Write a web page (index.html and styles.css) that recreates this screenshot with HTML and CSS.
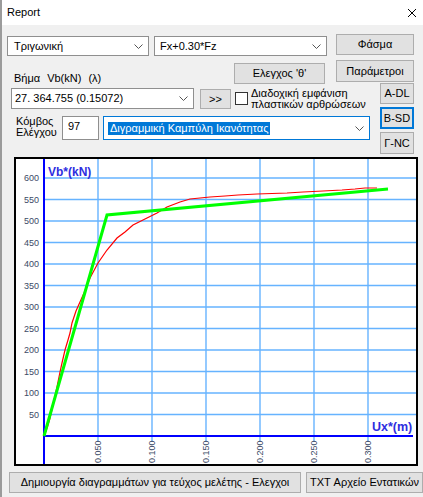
FILE: index.html
```html
<!DOCTYPE html>
<html lang="el">
<head>
<meta charset="utf-8">
<title>Report</title>
<link rel="stylesheet" href="styles.css">
</head>
<body>
<div class="window">
  <div class="titlebar">
    <span class="title">Report</span>
    <svg class="close" width="10" height="10" viewBox="0 0 10 10"><path d="M1 1 L9 9 M9 1 L1 9" stroke="#000" stroke-width="1" fill="none"/></svg>
  </div>
  <div class="content">
    <div class="row1">
      <div class="combo combo-type"><span>Τριγωνική</span><svg class="chev" width="9" height="5" viewBox="0 0 9 5"><path d="M0.5 0.5 L4.5 4.5 L8.5 0.5" fill="none" stroke="#555" stroke-width="1"/></svg></div>
      <div class="combo combo-load"><span>Fx+0.30*Fz</span><svg class="chev" width="9" height="5" viewBox="0 0 9 5"><path d="M0.5 0.5 L4.5 4.5 L8.5 0.5" fill="none" stroke="#555" stroke-width="1"/></svg></div>
      <button class="btn btn-spectrum">Φάσμα</button>
    </div>
    <div class="row2">
      <div class="leftblock">
        <div class="subA">
          <div class="step-label"><span>Βήμα</span><span class="lbl-gap">Vb(kN)</span><span class="lbl-gap">(λ)</span></div>
          <button class="btn btn-theta">Ελεγχος 'θ'</button>
        </div>
        <div class="subB">
          <div class="combo combo-step"><span>27. 364.755 (0.15072)</span><svg class="chev" width="9" height="5" viewBox="0 0 9 5"><path d="M0.5 0.5 L4.5 4.5 L8.5 0.5" fill="none" stroke="#555" stroke-width="1"/></svg></div>
          <button class="btn btn-next">&gt;&gt;</button>
          <span class="checkbox"></span>
          <div class="check-text">Διαδοχική εμφάνιση<br>πλαστικών αρθρώσεων</div>
        </div>
        <div class="subC">
          <div class="node-label">Κόμβος<br>Ελέγχου</div>
          <div class="input-node">97</div>
          <div class="combo combo-curve"><span class="selected">Διγραμμική Καμπύλη Ικανότητας</span><svg class="chev" width="9" height="5" viewBox="0 0 9 5"><path d="M0.5 0.5 L4.5 4.5 L8.5 0.5" fill="none" stroke="#555" stroke-width="1"/></svg></div>
        </div>
      </div>
      <div class="rightcol">
        <button class="btn btn-params">Παράμετροι</button>
        <button class="btn btn-level lvl-a">A-DL</button>
        <button class="btn btn-level lvl-b default">B-SD</button>
        <button class="btn btn-level lvl-c">Γ-NC</button>
      </div>
    </div>
    <div class="chart">
      <svg width="404" height="309" viewBox="14 157 404 309">
        <rect x="14" y="157" width="404" height="309" fill="#fff"/>
        <g class="grid">
          <line x1="98" y1="158" x2="98" y2="465"/>
          <line x1="152" y1="158" x2="152" y2="465"/>
          <line x1="206" y1="158" x2="206" y2="465"/>
          <line x1="260" y1="158" x2="260" y2="465"/>
          <line x1="314" y1="158" x2="314" y2="465"/>
          <line x1="368" y1="158" x2="368" y2="465"/>
          <line x1="44" y1="178" x2="416" y2="178"/>
          <line x1="44" y1="199.5" x2="416" y2="199.5"/>
          <line x1="44" y1="221" x2="416" y2="221"/>
          <line x1="44" y1="242.5" x2="416" y2="242.5"/>
          <line x1="44" y1="264" x2="416" y2="264"/>
          <line x1="44" y1="285.5" x2="416" y2="285.5"/>
          <line x1="44" y1="307" x2="416" y2="307"/>
          <line x1="44" y1="328.5" x2="416" y2="328.5"/>
          <line x1="44" y1="350" x2="416" y2="350"/>
          <line x1="44" y1="371.5" x2="416" y2="371.5"/>
          <line x1="44" y1="393" x2="416" y2="393"/>
          <line x1="44" y1="414.5" x2="416" y2="414.5"/>
        </g>
        <g class="axis">
          <line x1="44" y1="158" x2="44" y2="465"/>
          <line x1="44" y1="436" x2="413" y2="436"/>
        </g>
        <g class="ylabels">
          <text x="39" y="181">600</text>
          <text x="39" y="202.5">550</text>
          <text x="39" y="224">500</text>
          <text x="39" y="245.5">450</text>
          <text x="39" y="267">400</text>
          <text x="39" y="288.5">350</text>
          <text x="39" y="310">300</text>
          <text x="39" y="331.5">250</text>
          <text x="39" y="353">200</text>
          <text x="39" y="374.5">150</text>
          <text x="39" y="396">100</text>
          <text x="39" y="417.5">50</text>
        </g>
        <g class="xlabels">
          <rect x="94" y="441" width="8" height="23" fill="#fff"/>
          <rect x="148" y="441" width="8" height="23" fill="#fff"/>
          <rect x="202" y="441" width="8" height="23" fill="#fff"/>
          <rect x="256" y="441" width="8" height="23" fill="#fff"/>
          <rect x="310" y="441" width="8" height="23" fill="#fff"/>
          <rect x="364" y="441" width="8" height="23" fill="#fff"/>
          <text transform="translate(98 463) rotate(-90)" x="0" y="3.2">0.050</text>
          <text transform="translate(152 463) rotate(-90)" x="0" y="3.2">0.100</text>
          <text transform="translate(206 463) rotate(-90)" x="0" y="3.2">0.150</text>
          <text transform="translate(260 463) rotate(-90)" x="0" y="3.2">0.200</text>
          <text transform="translate(314 463) rotate(-90)" x="0" y="3.2">0.250</text>
          <text transform="translate(368 463) rotate(-90)" x="0" y="3.2">0.300</text>
        </g>
        <text class="axis-title" x="48" y="176">Vb*(kN)</text>
        <text class="axis-title axis-title-x" x="372" y="431">Ux*(m)</text>
        <polyline class="curve-red" points="44,436 46,431 48,425 50,418 53,405 57,387 60,372 62,363 65,350 68,340 70,333 72,323 76,311 80,302 84,293 90,278 98,263 107,250 117,238 125,232 133,225 147,218 157,213 167,207 180,202 190,199 200,198 210,197 225,196 238,195 257,194 287,193 303,192 323,191 342,190 355,189 365,188 377,188"/>
        <polyline class="curve-green" points="44,436 107,215 388,189"/>
        <rect x="15" y="158" width="402" height="307" fill="none" stroke="#000" stroke-width="2"/>
      </svg>
    </div>
    <div class="bottom">
      <button class="btn btn-diagrams">Δημιουργία διαγραμμάτων για τεύχος μελέτης - Ελεγχοι</button>
      <button class="btn btn-txt">TXT Αρχείο Εντατικών</button>
    </div>
  </div>
</div>
</body>
</html>
```
FILE: styles.css
```css
html, body {
  margin: 0;
  padding: 0;
}
body {
  width: 423px;
  height: 497px;
  overflow: hidden;
  background: #f0f0f0;
  font-family: "Liberation Sans", Arial, sans-serif;
  font-size: 11px;
  color: #000;
}
.window {
  height: 497px;
  box-sizing: border-box;
  border-left: 2px solid #9b9b9b;
  background: #f0f0f0;
}
.titlebar {
  height: 25px;
  background: #fff;
  display: flex;
  align-items: center;
  justify-content: space-between;
  padding: 0 6px 0 5px;
}
.title {
  line-height: 25px;
}
.close {
  display: block;
}
.content {
  padding-left: 5px;
}
.row1 {
  height: 35px;
  box-sizing: border-box;
  padding-top: 9px;
  display: flex;
  align-items: flex-start;
}
.combo {
  box-sizing: border-box;
  background: #fff;
  border: 1px solid #8f8f8f;
  display: flex;
  align-items: center;
  justify-content: space-between;
  padding: 0 5px 0 6px;
  line-height: 13px;
  white-space: nowrap;
  flex-shrink: 0;
}
.chev {
  display: block;
  flex-shrink: 0;
}
.combo-type {
  width: 142px;
  height: 20px;
  margin-top: 2px;
}
.combo-load {
  width: 173px;
  height: 20px;
  margin-top: 2px;
  margin-left: 5px;
  padding-left: 5px;
}
.btn {
  box-sizing: border-box;
  background: #e1e1e1;
  border: 1px solid #adadad;
  font: inherit;
  color: #000;
  padding: 0;
  margin: 0;
  display: flex;
  align-items: center;
  justify-content: center;
  line-height: 13px;
  white-space: nowrap;
  flex-shrink: 0;
}
.btn-spectrum {
  width: 78px;
  height: 21px;
  margin-left: 9px;
}
.row2 {
  height: 97px;
  display: flex;
}
.leftblock {
  width: 329px;
  flex-shrink: 0;
  display: flex;
  flex-direction: column;
}
.subA {
  height: 28px;
  display: grid;
  grid-template-columns: 227px 91px;
}
.step-label {
  align-self: end;
  padding-left: 7px;
  line-height: 14px;
  margin-bottom: 3px;
  display: flex;
}
.lbl-gap {
  margin-left: 7px;
}
.btn-theta {
  width: 91px;
  height: 21px;
  margin-top: 3px;
}
.subB {
  height: 28px;
  display: flex;
  align-items: flex-start;
}
.combo-step {
  width: 183px;
  height: 21px;
  margin-left: 4px;
  padding-left: 3px;
}
.btn-next {
  width: 31px;
  height: 20px;
  margin-left: 6px;
  margin-top: 1px;
}
.checkbox {
  width: 13px;
  height: 13px;
  box-sizing: border-box;
  border: 1px solid #333;
  background: #fff;
  margin-left: 4px;
  margin-top: 4px;
  flex-shrink: 0;
}
.check-text {
  margin-left: 3px;
  line-height: 11px;
  white-space: nowrap;
}
.subC {
  height: 24px;
  display: flex;
  align-items: flex-start;
}
.node-label {
  margin-left: 9px;
  width: 46px;
  line-height: 11px;
  flex-shrink: 0;
}
.input-node {
  width: 37px;
  height: 24px;
  box-sizing: border-box;
  border: 1px solid #8f8f8f;
  background: #fff;
  padding: 3px 0 0 5px;
  line-height: 13px;
  flex-shrink: 0;
}
.combo-curve {
  width: 267px;
  height: 24px;
  margin-left: 4px;
  border-color: #0078d7;
  padding-left: 4px;
}
.selected {
  background: #0078d7;
  color: #fff;
  padding: 0 2px;
  line-height: 13px;
}
.rightcol {
  width: 78px;
  display: flex;
  flex-direction: column;
  align-items: flex-end;
}
.btn-params {
  width: 78px;
  height: 22px;
}
.btn-level {
  width: 34px;
}
.lvl-a {
  height: 21px;
  margin-top: 1px;
}
.lvl-b {
  height: 22px;
  margin-top: 3px;
}
.lvl-c {
  height: 22px;
  margin-top: 3px;
}
.default {
  border: 2px solid #0078d7;
}
.chart {
  margin-left: 7px;
  width: 404px;
  height: 309px;
}
.chart svg {
  display: block;
}
.grid line {
  stroke: #66b3ff;
  stroke-width: 1.4;
}
.axis line {
  stroke: #0000ff;
  stroke-width: 2;
}
.ylabels text {
  font-family: "Liberation Sans", Arial, sans-serif;
  font-size: 9px;
  fill: #3b4a66;
  text-anchor: end;
}
.xlabels text {
  font-family: "Liberation Sans", Arial, sans-serif;
  font-size: 9px;
  fill: #3b4a66;
}
.axis-title {
  font-family: "Liberation Sans", Arial, sans-serif;
  font-size: 12px;
  font-weight: bold;
  fill: #2e2ee0;
}
.axis-title-x {
  font-size: 12.5px;
}
.curve-red {
  fill: none;
  stroke: #ff0000;
  stroke-width: 1.2;
}
.curve-green {
  fill: none;
  stroke: #00ff00;
  stroke-width: 3;
}
.bottom {
  margin-top: 6px;
  display: flex;
}
.btn-diagrams {
  width: 292px;
  height: 21px;
  margin-left: 2px;
}
.btn-txt {
  width: 117px;
  height: 21px;
  margin-left: 5px;
}
```
